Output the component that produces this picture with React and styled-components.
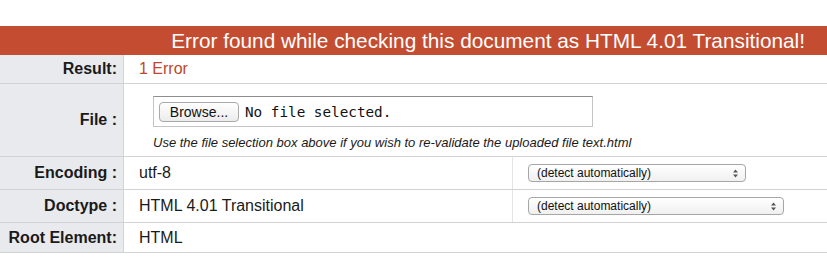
import styled, { createGlobalStyle } from "styled-components";

const GlobalStyle = createGlobalStyle`
  body {
    margin: 0;
    background: #ffffff;
    font-family: "Liberation Sans", Arial, sans-serif;
    color: #1a1a1a;
  }
`;

const StyledPage = styled.div`
  padding-top: 26px;
  width: 827px;
`;

const StyledHeader = styled.div`
  height: 29px;
  background: #c44d31;
  color: #ffffff;
  font-size: 20.8px;
  line-height: 29px;
  text-align: right;
  padding-right: 22px;
`;

const StyledRow = styled.div`
  display: grid;
  grid-template-columns: ${(p) => (p.$split ? "124px 389px 1fr" : "124px 1fr")};
  height: ${(p) => p.$height}px;
  border-bottom: 1px solid #d2d2d2;
  box-sizing: border-box;
`;

const StyledLabel = styled.div`
  background: #e9eaee;
  border-right: 1px solid #d4d4d4;
  display: flex;
  align-items: center;
  justify-content: flex-end;
  padding-right: 6px;
  font-weight: bold;
  font-size: 16px;
`;

const StyledValue = styled.div`
  display: flex;
  align-items: center;
  padding-left: 15px;
  font-size: 16px;
  color: ${(p) => p.$color || "#1a1a1a"};
  border-right: ${(p) => (p.$divider ? "1px solid #e4e4e4" : "none")};
`;

const StyledFileCell = styled.div`
  padding: 12px 0 0 29px;
`;

const StyledFileBox = styled.div`
  width: 440px;
  height: 31px;
  box-sizing: border-box;
  border: 1px solid #c4c4c4;
  border-top-color: #8e8e8e;
  display: flex;
  align-items: center;
  padding-left: 5px;
  gap: 6px;
`;

const StyledBrowse = styled.button`
  width: 80px;
  height: 20px;
  padding: 0;
  border: 1px solid #a9a9a9;
  border-radius: 4px;
  background: linear-gradient(#ffffff, #ececec);
  font-family: "Liberation Sans", Arial, sans-serif;
  font-size: 14px;
  color: #111;
  line-height: 18px;
`;

const StyledFileName = styled.span`
  font-family: "DejaVu Sans Mono", "Liberation Mono", monospace;
  font-size: 14.3px;
  color: #111;
`;

const StyledHint = styled.p`
  margin: 8px 0 0;
  font-size: 13px;
  font-style: italic;
  color: #1a1a1a;
`;

const StyledSelect = styled.div`
  width: ${(p) => p.$width}px;
  height: 18px;
  box-sizing: border-box;
  border: 1px solid #a6a6a6;
  border-radius: 4px;
  background: linear-gradient(#ffffff, #f0f0f0);
  display: flex;
  align-items: center;
  justify-content: space-between;
  padding: 0 7px 0 8px;
  font-family: "Liberation Sans", Arial, sans-serif;
  font-size: 12px;
  color: #111;
`;

function Arrows() {
  return (
    <svg width="5" height="9" viewBox="0 0 5 9">
      <path d="M0 3.5 L2.5 0.5 L5 3.5 Z" fill="#555" />
      <path d="M0 5.5 L2.5 8.5 L5 5.5 Z" fill="#555" />
    </svg>
  );
}

function Select({ width }) {
  return (
    <StyledSelect $width={width}>
      <span>(detect automatically)</span>
      <Arrows />
    </StyledSelect>
  );
}

export default function App() {
  return (
    <StyledPage>
      <GlobalStyle />
      <StyledHeader>Error found while checking this document as HTML 4.01 Transitional!</StyledHeader>
      <StyledRow $height={29}>
        <StyledLabel>Result:</StyledLabel>
        <StyledValue $color="#c0462c">1 Error</StyledValue>
      </StyledRow>
      <StyledRow $height={73}>
        <StyledLabel>File :</StyledLabel>
        <StyledFileCell>
          <StyledFileBox>
            <StyledBrowse>Browse...</StyledBrowse>
            <StyledFileName>No file selected.</StyledFileName>
          </StyledFileBox>
          <StyledHint>
            Use the file selection box above if you wish to re-validate the uploaded file text.html
          </StyledHint>
        </StyledFileCell>
      </StyledRow>
      <StyledRow $height={33} $split>
        <StyledLabel>Encoding :</StyledLabel>
        <StyledValue $divider>utf-8</StyledValue>
        <StyledValue>
          <Select width={218} />
        </StyledValue>
      </StyledRow>
      <StyledRow $height={33} $split>
        <StyledLabel>Doctype :</StyledLabel>
        <StyledValue $divider>HTML 4.01 Transitional</StyledValue>
        <StyledValue>
          <Select width={256} />
        </StyledValue>
      </StyledRow>
      <StyledRow $height={30}>
        <StyledLabel>Root Element:</StyledLabel>
        <StyledValue>HTML</StyledValue>
      </StyledRow>
    </StyledPage>
  );
}
